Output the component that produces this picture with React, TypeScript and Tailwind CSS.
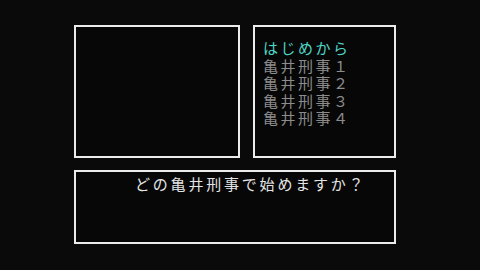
import React from "react";

const font = { fontFamily: '"Noto Sans CJK JP", "Noto Sans", sans-serif' };

export default function App() {
  const items = ["亀井刑事１", "亀井刑事２", "亀井刑事３", "亀井刑事４"];
  return (
    <div
      className="w-[480px] h-[270px] bg-[#0a0a0a] overflow-hidden pl-[74px] pt-[25px] flex flex-col"
      style={font}
    >
      <div className="flex gap-[13px]">
        <div className="w-[166px] h-[133px] border-2 border-[#ececec] bg-[#070707]" />
        <div className="w-[143px] h-[133px] border-2 border-[#ececec] bg-[#070707] pl-[8px] pt-[12px] flex flex-col text-[15px] leading-[17.5px] tracking-[2.5px]">
          <div className="text-[#4fd6c6]">はじめから</div>
          {items.map((t) => (
            <div key={t} className="text-[#8c8c8c]">
              {t}
            </div>
          ))}
        </div>
      </div>
      <div className="mt-[12px] w-[322px] h-[74px] border-2 border-[#ececec] bg-[#070707] pl-[59px] pt-[3px] text-[15px] leading-[17.5px] tracking-[2.8px] text-[#e4e4e4]">
        どの亀井刑事で始めますか？
      </div>
    </div>
  );
}
